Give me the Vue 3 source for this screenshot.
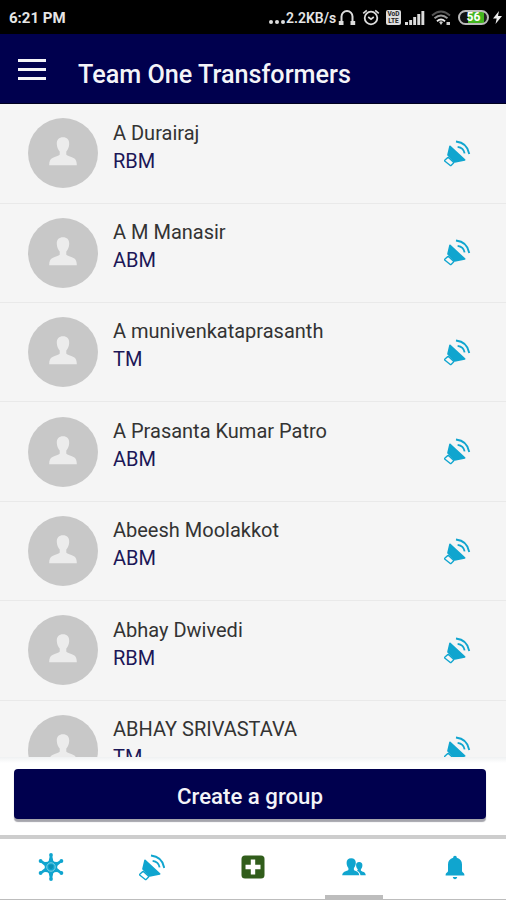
<template>
  <div class="phone">
    <!-- Status bar -->
    <div class="status">
      <span class="clock">6:21 PM</span>
      <div class="status-right">
        <span class="dots"><i></i><i></i><i></i></span>
        <span class="speed">2.2KB/s</span>
        <svg class="headset" viewBox="0 0 18 17" width="18" height="17">
          <path d="M3.500 14V7.500a5.500 5.500 0 0 1 11 0V14" fill="none" stroke="#ddd" stroke-width="2" />
          <path d="M.8 12h4.700v4H.8zM12.500 12h4.700v4h-4.700z" fill="#ddd" />
        </svg>
        <svg class="alarm" viewBox="0 0 18 17" width="18" height="17">
          <circle cx="9" cy="9" r="6.300" fill="none" stroke="#ddd" stroke-width="1.800" />
          <path d="M1.200 4.300 4.800 1.300M16.800 4.300l-3.600-3M6.200 8l2.800 2.200L11.800 8" fill="none" stroke="#ddd" stroke-width="1.600" />
        </svg>
        <span class="volte"><b>VoD</b><b>LTE</b></span>
        <svg class="signal" viewBox="0 0 20 16" width="20" height="16">
          <path d="M0 12h3v3H0zM4.200 10h2.900v5H4.200zM8.200 7h2.900v8H8.200zM12.300 4h2.900v11h-2.900zM16.400 1h2.900v14h-2.900z" fill="#ddd" />
        </svg>
        <svg class="wifi" viewBox="0 0 20 16" width="20" height="16">
          <path d="M1 5.500Q10-2.500 19 5.500" fill="none" stroke="#555" stroke-width="1.800" />
          <path d="M3.500 8.300Q10 2.700 16.500 8.300" fill="none" stroke="#999" stroke-width="1.900" />
          <path d="M6 11.200Q10 7.800 14 11.200" fill="none" stroke="#eee" stroke-width="2" />
          <path d="m10 15 2-3q-2-1.300-4 0zM15.500 12h3.500v3h-3.500z" fill="#ccc" />
        </svg>
        <span class="battery"><span class="level">56</span></span>
        <svg class="bolt" viewBox="0 0 9 13" width="9" height="13">
          <path d="M6 0 0 7.500h3.700L2.500 13 9 5H5z" fill="#eee" />
        </svg>
      </div>
    </div>

    <!-- Header -->
    <header class="header">
      <div class="burger"><span></span><span></span><span></span></div>
      <h1>Team One Transformers</h1>
    </header>

    <!-- Contacts -->
    <div class="list">
      <div v-for="person in people" :key="person.name" class="row">
        <div class="avatar">
          <svg viewBox="0 0 28 29" width="28" height="29">
            <path
              d="M14 .3c4 0 6.400 2.400 6.200 6.700-.1 2.900-1.300 5.800-2.900 7.500v3.300c1 1.300 4.500 1.900 7.200 3.200 2.500 1.200 3.300 3.500 3.300 7.200H.2c0-3.700.8-6 3.300-7.200 2.700-1.300 6.200-1.900 7.200-3.200v-3.300C9.100 12.800 7.900 9.900 7.800 7 7.600 2.700 10 .3 14 .3z"
              fill="#ececec"
            />
          </svg>
        </div>
        <div class="info">
          <div class="name">{{ person.name }}</div>
          <div class="role">{{ person.role }}</div>
        </div>
        <svg class="horn" viewBox="58 46 80 81" width="26.600" height="27">
          <path :d="horn.cone" class="cone" />
          <path :d="horn.handle" class="line handle" />
          <path :d="horn.waves" class="line" />
        </svg>
      </div>
    </div>

    <div class="action">
      <button class="create">Create a group</button>
    </div>

    <!-- Bottom tabs -->
    <nav class="tabs">
      <div class="tab">
        <svg viewBox="0 0 26 28" width="26" height="28">
          <circle v-for="(p, i) in spokes" :key="i" :cx="p[0]" :cy="p[1]" r="1.900" fill="#10a5cf" />
          <path
            d="M12 2h2l1.500 6.800 3.700.2 3.700-1.900 1 1.800-5.200 4.300v1.600l5.200 4.300-1 1.800-3.700-1.900-3.700.2L14 26h-2l-1.500-6.800-3.700-.2-3.700 1.900-1-1.800 5.200-4.300v-1.600L2.100 8.900l1-1.800L6.800 9l3.700-.2z"
            fill="#10a5cf"
          />
          <circle cx="13" cy="14" r="6.300" fill="#10a5cf" />
          <circle cx="13" cy="14" r="4.200" fill="none" stroke="#7fd0e6" stroke-width="1" />
          <path d="M10.800 12.300 13 11.500l2.200.8v2.200L13 16.500l-2.200-2z" fill="#0b8fb5" />
        </svg>
      </div>
      <div class="tab">
        <svg viewBox="58 46 80 81" width="26.600" height="27">
          <path :d="horn.cone" class="cone" />
          <path :d="horn.handle" class="line handle" />
          <path :d="horn.waves" class="line" />
        </svg>
      </div>
      <div class="tab">
        <svg viewBox="0 0 24 24" width="24" height="24">
          <rect x=".5" y=".5" width="23" height="23" rx="3.500" fill="#315d1b" />
          <path d="M9.800 4.500h4.400v5.300h5.300v4.400h-5.300v5.300H9.800v-5.300H4.500V9.800h5.300z" fill="#fff" />
        </svg>
      </div>
      <div class="tab active">
        <svg viewBox="0 0 24 18" width="24" height="18">
          <path
            d="M17.200 4c2.200 0 3.400 1.400 3.200 3.600-.1 1.600-.7 2.900-1.500 3.700v1.400c1.200 1 4.800 1.100 4.900 4.600h-5.300c-.4-2.500-1.700-3.600-3.300-4.300v-.6l.5-.3v-.8c-.8-.8-1.500-2.100-1.600-3.700C13.900 5.400 15 4 17.200 4z"
            fill="#10a5cf"
          />
          <path
            d="M9.200.3c3 0 4.700 1.800 4.600 4.800-.1 2-.8 3.800-1.900 4.900v2c1.500 1.200 5.200 1.300 5.400 5.300H.2c.2-4 4.600-4.100 6.200-5.300v-2C5.300 8.900 4.700 7.100 4.600 5.100 4.500 2.100 6.200.3 9.200.3z"
            fill="#10a5cf"
          />
        </svg>
      </div>
      <div class="tab">
        <svg viewBox="0 0 20 25" width="20" height="25">
          <path
            d="M10 .8c1.200 0 1.800.8 1.800 2C15.300 3.700 17 6 17 9.500v6.800c.2 1 2.400 1.600 2.400 3.400v.8H.6v-.8c0-1.800 2.200-2.400 2.400-3.400V9.500c0-3.500 1.700-5.800 5.200-6.700 0-1.200.6-2 1.800-2zM7.800 22h4.400c-.2 1.400-1 2.200-2.200 2.200S8 23.400 7.800 22z"
            fill="#10a5cf"
          />
        </svg>
      </div>
    </nav>
  </div>
</template>

<script setup>
const people = [
  { name: 'A Durairaj', role: 'RBM' },
  { name: 'A M Manasir', role: 'ABM' },
  { name: 'A munivenkataprasanth', role: 'TM' },
  { name: 'A Prasanta Kumar Patro', role: 'ABM' },
  { name: 'Abeesh Moolakkot', role: 'ABM' },
  { name: 'Abhay Dwivedi', role: 'RBM' },
  { name: 'ABHAY SRIVASTAVA', role: 'TM' }
]

// megaphone, shared by the rows and the second tab
const horn = {
  cone: 'M76 65 120 106 90 112 70 91z',
  handle: 'M61 106l8-7q2-1 4 1l13 12q2 2 0 4l-6 6q-2 2-4 0L61 110q-2-2 0-4z',
  waves: 'M94 50.500Q128 54 134 88M99 66.500Q117 69 120 86'
}

const spokes = [[13, 2], [13, 26], [2.6, 8], [23.4, 20], [2.6, 20], [23.4, 8]]
</script>

<style>
body {
  background: #fff;
}
</style>

<style scoped>
.phone {
  width: 506px;
  height: 900px;
  display: flex;
  flex-direction: column;
  overflow: hidden;
  background: #fff;
  font-family: Roboto, "Liberation Sans", sans-serif;
}

/* Status bar */
.status {
  height: 34px;
  flex-shrink: 0;
  background: #000;
  color: #e6e6e6;
  display: flex;
  align-items: center;
  justify-content: space-between;
  padding: 1px 4px 0 9px;
  box-sizing: border-box;
}
.clock { font-size: 15px; font-weight: 700; }
.status-right { display: flex; align-items: center; }
.dots { display: flex; gap: 2px; margin: 9px 1px 0 0; }
.dots i { width: 4px; height: 4px; border-radius: 50%; background: #ddd; }
.speed { font-size: 14px; font-weight: 600; width: 51px; white-space: nowrap; }
.headset { margin-left: 1px; }
.alarm { margin-left: 6px; }
.volte {
  width: 15px;
  height: 15px;
  margin-left: 6px;
  border-radius: 2px;
  background: #ddd;
  color: #222;
  display: flex;
  flex-direction: column;
  align-items: center;
  justify-content: center;
}
.volte b { font-size: 6.5px; line-height: 6.5px; }
.signal { margin-left: 4px; }
.wifi { margin-left: 6px; }
.battery {
  width: 31px;
  height: 15px;
  margin-left: 7px;
  box-sizing: border-box;
  border: 2px solid #bbb;
  border-radius: 8px;
  background: linear-gradient(90deg, #111 30%, #43b51f 30%, #43b51f 90%, #222 90%);
  display: flex;
  align-items: center;
  justify-content: center;
}
.level { font-size: 12px; font-weight: 700; color: #fff; line-height: 11px; }
.bolt { margin-left: 4px; }

/* Header */
.header {
  height: 70px;
  flex-shrink: 0;
  box-sizing: border-box;
  background: #00004e;
  border-bottom: 1px solid #000020;
  display: flex;
  align-items: center;
  padding-left: 18px;
}
.burger {
  width: 28px;
  display: flex;
  flex-direction: column;
  gap: 6px;
  margin: 2px 32px 0 0;
}
.burger span { height: 3px; background: #f4f4f8; }
h1 {
  margin: 12px 0 0;
  font-size: 25.2px;
  line-height: 30px;
  font-weight: 500;
  color: #f4f4f8;
  white-space: nowrap;
}

/* Contacts */
.list {
  height: 653px;
  flex-shrink: 0;
  box-sizing: border-box;
  padding-top: 0.3px;
  overflow: hidden;
  background: #f5f5f5;
}
.row {
  height: 99.4px;
  box-sizing: border-box;
  border-bottom: 1px solid #e9e9e9;
  display: flex;
  align-items: center;
  padding: 0 35px 0 28.4px;
}
.avatar {
  width: 70px;
  height: 70px;
  border-radius: 50%;
  background: #c8c8c8;
  display: flex;
  align-items: center;
  justify-content: center;
  padding-bottom: 3px;
  box-sizing: border-box;
}
.info { flex: 1; padding-left: 14.6px; margin-top: -13.8px; }
.name, .role {
  font-size: 20px;
  line-height: 28px;
  white-space: nowrap;
}
.name { color: #333; }
.role { color: #1c1757; }
.cone {
  fill: #10a5cf;
  stroke: #10a5cf;
  stroke-width: 5;
  stroke-linejoin: round;
}
.line {
  fill: none;
  stroke: #10a5cf;
  stroke-width: 5.5;
}
.handle { stroke-width: 4; }

/* Create button */
.action {
  height: 78px;
  flex-shrink: 0;
  box-sizing: border-box;
  padding: 12px 20px 0 14px;
  background: linear-gradient(#eff1f2, #fff 6px);
}
.create {
  display: block;
  width: 100%;
  height: 50px;
  border: 0;
  border-radius: 4px;
  background: #00004e;
  box-shadow: 0 3px 1px #a5a5ac;
  color: #f4f4f8;
  font-family: inherit;
  font-size: 22.2px;
  font-weight: 500;
  padding: 4px 0 0;
}

/* Tabs */
.tabs {
  height: 65px;
  flex-shrink: 0;
  box-sizing: border-box;
  border-top: 4px solid #cdcdcd;
  border-bottom: 1px solid #bdbdbd;
  display: flex;
}
.tab {
  flex: 1;
  display: flex;
  align-items: center;
  justify-content: center;
  padding-bottom: 4px;
}
.tab.active {
  background: linear-gradient(#bdbdbd, #bdbdbd) center bottom / 58px 4px no-repeat;
}
</style>
